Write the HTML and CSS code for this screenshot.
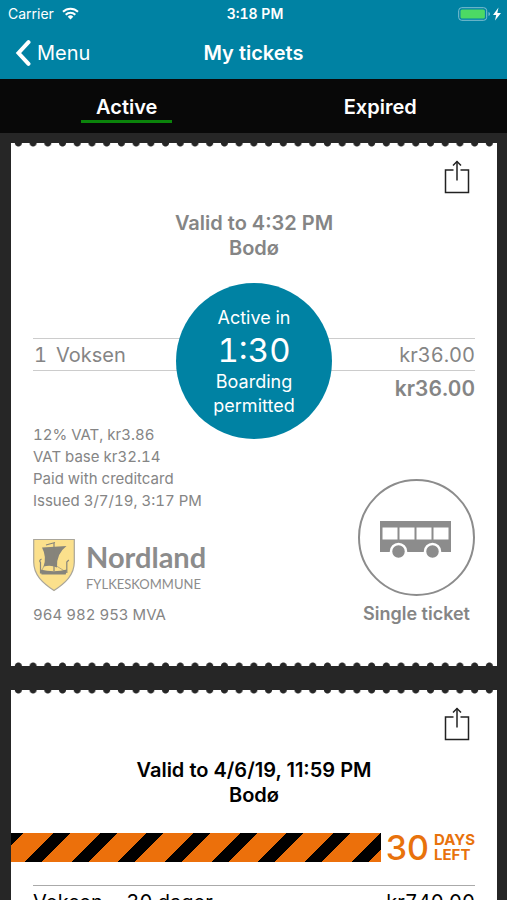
FILE: index.html
```html
<!DOCTYPE html>
<html lang="en">
<head>
<meta charset="utf-8">
<meta name="viewport" content="width=device-width, initial-scale=1">
<title>My tickets</title>
<link rel="stylesheet" href="styles.css">
</head>
<body>
<div class="app">
  <header class="header">
    <div class="status">
      <span class="carrier">Carrier
        <svg class="wifi" viewBox="0 0 17 13" aria-hidden="true"><g fill="none" stroke="#fff" stroke-width="2"><path d="M1 4.800a10.600 10.600 0 0 1 15 0"/><path d="M3.700 7.700a6.800 6.800 0 0 1 9.600 0"/></g><path d="M5.700 9.700a4 4 0 0 1 5.600 0L8.500 12.500z" fill="#fff"/></svg>
      </span>
      <span class="clock">3:18 PM</span>
      <svg class="battery" viewBox="0 0 44 16" aria-hidden="true"><rect x=".7" y="1.700" width="28" height="12.600" rx="3" fill="none" stroke="#7fc0d1"/><rect x="2.500" y="3.500" width="24.400" height="9" rx="1.500" fill="#4cd964"/><path d="M30.500 6v4q1.500-.5 1.500-2t-1.500-2z" fill="#7fc0d1"/><path d="M40.500 1.500L35 9h3.200l-1.200 5.500 6-7.500h-3.700z" fill="#fff"/></svg>
    </div>
    <nav class="navbar">
      <a class="back" href="#menu"><svg class="chevron" viewBox="0 0 16 26" aria-hidden="true"><path d="M13.500 2.200L3.500 13l10 10.800" fill="none" stroke="#fff" stroke-width="4" stroke-linecap="round" stroke-linejoin="miter"/></svg>Menu</a>
      <h1 class="title">My tickets</h1>
    </nav>
  </header>
  <div class="tabs">
    <button class="tab" type="button"><span class="tab-label tab-current">Active</span></button>
    <button class="tab" type="button"><span class="tab-label">Expired</span></button>
  </div>
  <main class="list">
    <article class="ticket pending">
      <button class="share" type="button" aria-label="Share"><svg viewBox="0 0 26 34" aria-hidden="true"><g fill="none" stroke="#222" stroke-width="1.500"><path d="M9.500 10H1.500v22.500h23V10H16.500M13 1.500V20.500"/><path d="M9 5.500L13 1.500l4 4"/></g></svg></button>
      <h2 class="validity">Valid to 4:32 PM<br>Bodø</h2>
      <section class="receipt">
        <div class="line"><span class="item"><span>1</span><span>Voksen</span></span><span>kr36.00</span></div>
        <div class="total">kr36.00</div>
        <div class="countdown"><span>Active in</span><span class="timer">1:30</span><span>Boarding<br>permitted</span></div>
      </section>
      <div class="details">
        <div class="seller">
          <p class="info">12% VAT, kr3.86<br>VAT base kr32.14<br>Paid with creditcard<br>Issued 3/7/19, 3:17 PM</p>
          <div class="brand">
            <svg class="shield" viewBox="0 0 42 54" aria-hidden="true"><path d="M.7 1.500h40.600V24c0 13-9 21-20.300 28.500C9.700 45 .7 37 .7 24z" fill="#fbe08c" stroke="#aaa69a" stroke-width="1.200"/><g fill="#86847b"><path d="M9 9.500q13-1 24.500-1.500Q23 16 24 29.500q-6-3-13.500-1Q14 19 9 9.500z"/><path d="M7.200 31.500q13.800 3.500 26.800 0l-1.300 5H8.500z"/></g><path d="M7.500 35.500V24.500q-2-2 1-3.500M33.800 35V24l2-2M13 7l9-2.500M21 5v28" fill="none" stroke="#86847b" stroke-width="1.200"/><path d="M11 28l-2 4M23.500 28l8 5" stroke="#86847b" stroke-width=".6"/></svg>
            <div class="wordmark"><span class="county">Nordland</span><span class="council">FYLKESKOMMUNE</span></div>
          </div>
          <p class="info">964 982 953 MVA</p>
        </div>
        <div class="kind">
          <svg class="bus" viewBox="0 0 117 117" aria-hidden="true"><circle cx="58.500" cy="58.500" r="57.500" fill="none" stroke="#8c8c8c" stroke-width="2"/><path fill="#8c8c8c" fill-rule="evenodd" d="M22 42h71v31H22zM24.500 48.500v12h15v-12zM41.500 48.500v12h15v-12zM58.500 48.500v12h15v-12zM75.500 48.500v12h15v-12z"/><g fill="#8c8c8c" stroke="#fff" stroke-width="2.500"><circle cx="40.500" cy="72.500" r="7.500"/><circle cx="74.500" cy="72.500" r="7.500"/></g></svg>
          <span>Single ticket</span>
        </div>
      </div>
    </article>
    <article class="ticket">
      <button class="share" type="button" aria-label="Share"><svg viewBox="0 0 26 34" aria-hidden="true"><g fill="none" stroke="#222" stroke-width="1.500"><path d="M9.500 10H1.500v22.500h23V10H16.500M13 1.500V20.500"/><path d="M9 5.500L13 1.500l4 4"/></g></svg></button>
      <h2 class="validity">Valid to 4/6/19, 11:59 PM<br>Bodø</h2>
      <div class="remaining"><span class="tape"></span><span class="days">30</span><span class="days-label"><span>DAYS</span><span>LEFT</span></span></div>
      <section class="receipt">
        <div class="line"><span>Voksen - 30 dager</span><span>kr740.00</span></div>
        <div class="total">kr740.00</div>
      </section>
    </article>
  </main>
</div>
</body>
</html>
```

FILE: styles.css
```css
* { box-sizing: border-box; }

body {
  margin: 0;
  background: #262626;
  font-family: Inter, "Liberation Sans", sans-serif;
  color: #000;
}

h1, h2, p { margin: 0; }
button { border: 0; padding: 0; background: none; font: inherit; color: inherit; }

.app { display: flex; flex-direction: column; height: 100vh; }

.header { flex: none; background: #0082a3; color: #fff; }

.status, .navbar { display: grid; grid-template-columns: 1fr auto 1fr; align-items: center; }
.status { height: 27px; padding: 0 5px 0 8px; font-size: 14px; }
.carrier { display: flex; align-items: center; gap: 8px; }
.wifi { width: 17px; height: 13px; }
.clock, .receipt, .info { font-variant-numeric: tabular-nums; }
.clock { font-weight: 600; }
.battery { width: 44px; height: 16px; justify-self: end; }

.navbar { height: 52px; padding: 0 15px; font-size: 20px; }
.back { display: flex; align-items: center; gap: 6px; color: inherit; text-decoration: none; }
.chevron { width: 16px; height: 26px; }
.title { font-size: 20px; font-weight: 600; }

.tabs { flex: none; display: grid; grid-template-columns: 1fr 1fr; height: 54px; background: #080808; color: #fff; }
.tab { font-size: 20px; font-weight: 600; }
.tab-label { display: inline-block; padding: 4px 15px 0; line-height: 26px; border-bottom: 3px solid transparent; }
.tab-current { border-color: #0b840b; }

.list {
  flex: 1;
  min-height: 0;
  display: flex;
  flex-direction: column;
  gap: 24px;
  padding: 10px 10px 24px 11px;
  overflow-y: auto;
  scrollbar-width: none;
}

.ticket {
  flex: none;
  display: flex;
  flex-direction: column;
  padding: 17px 22px 40px;
  background:
    radial-gradient(circle at 50% 0, #262626 3px, transparent 4px) 0 0 / calc(100% / 33) 4px repeat-x,
    radial-gradient(circle at 50% 100%, #262626 3px, transparent 4px) 0 100% / calc(100% / 33) 4px repeat-x,
    #fff;
}

.pending { color: #858585; }

.share { align-self: flex-end; width: 26px; height: 34px; margin-right: 5px; }
.share svg { display: block; width: 26px; height: 34px; }

.validity { margin-top: 17px; text-align: center; font-size: 20px; font-weight: 600; line-height: 25px; }

.receipt { position: relative; margin-top: 23px; font-size: 20px; line-height: 29px; }
.pending .receipt { margin-top: 77px; }
.line { display: flex; justify-content: space-between; padding-top: 2px; border-top: 1px solid #aaa; border-bottom: 1px solid #aaa; }
.pending .line { border-color: #ccc; }
.item { display: flex; gap: 9px; padding-left: 1px; }
.total { text-align: right; font-size: 21px; font-weight: 600; line-height: 35px; }

.countdown {
  position: absolute;
  top: 50%;
  left: 50%;
  transform: translate(-50%, -50%);
  margin-top: -11px;
  padding-top: 2px;
  display: flex;
  flex-direction: column;
  align-items: center;
  justify-content: center;
  width: 156px;
  height: 156px;
  border-radius: 50%;
  background: #0082a3;
  color: #fff;
  font-size: 18px;
  line-height: 24px;
  text-align: center;
}
.timer { font-size: 33px; line-height: 40px; }

.details { display: flex; justify-content: space-between; align-items: flex-end; margin-top: 18px; }
.info { font-size: 15px; line-height: 22px; }
.brand { display: flex; gap: 11px; margin: 26px 0 12px; }
.shield { width: 42px; height: 54px; }
.wordmark { display: flex; flex-direction: column; font-family: Lato, "Liberation Sans", sans-serif; color: #8c8c8c; }
.county { font-size: 29px; font-weight: 700; line-height: 38px; }
.council { font-size: 13px; line-height: 16px; }

.kind { display: flex; flex-direction: column; align-items: center; gap: 6px; font-size: 18px; font-weight: 600; line-height: 24px; }
.bus { width: 117px; height: 117px; }

.remaining { display: flex; align-items: center; margin: 24px 0 0 -22px; color: #e8720c; }
.tape {
  flex: 1;
  height: 29px;
  background: repeating-linear-gradient(135deg, #000 0 9px, #ec700b 9px 30px, #000 30px 33px);
}
.days { margin: 0 5px; font-size: 34px; font-weight: 500; line-height: 29px; }
.days-label { display: grid; font-size: 15px; font-weight: 700; line-height: 15px; }
```
